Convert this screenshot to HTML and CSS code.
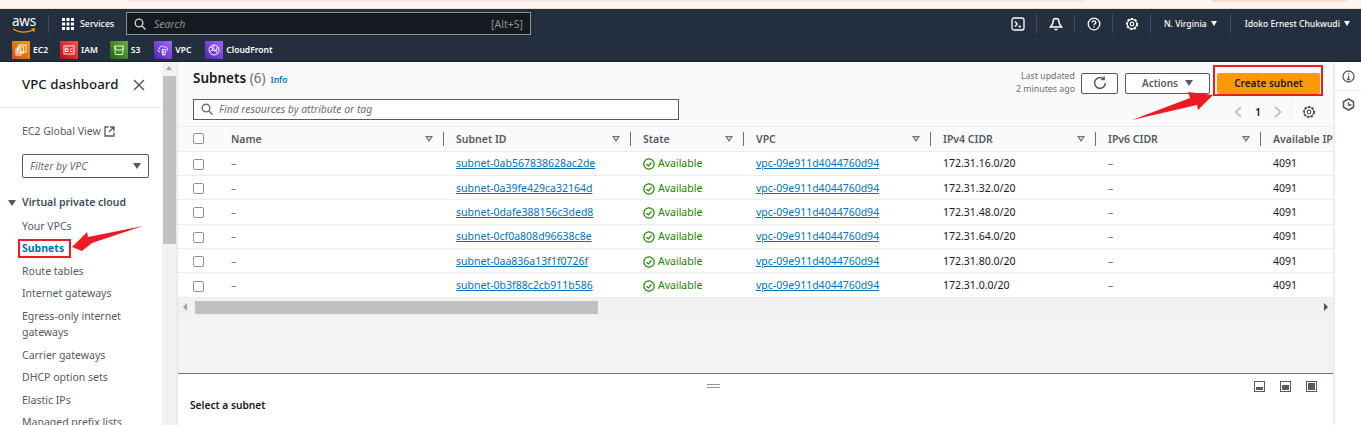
FILE: index.html
```html
<!DOCTYPE html>
<html lang="en">
  <head>
    <meta charset="UTF-8" />
    <meta name="viewport" content="width=device-width, initial-scale=1.0" />
    <title>Subnets | VPC Console</title>
    <link rel="stylesheet" href="styles.css">
  </head>
  <body>
    <div class="strip">
      <span class="strip-grey"></span>
      <span class="strip-peach"></span>
    </div>

    <header class="header">
      <div class="nav-top">
        <div class="logo">
          <span class="logo-text">aws</span>
          <svg class="logo-smile" width="24" height="6" viewBox="0 0 24 6"><path d="M1 1c6 4 15 4 21 .5M19.5 1 22.5 .8 21.8 3.8" fill="none" stroke="#f90" stroke-width="1.2"/></svg>
        </div>
        <span class="nav-sep"></span>
        <svg class="grid-icon" width="12" height="12" viewBox="0 0 12 12" fill="#fff"><rect width="3" height="3"/><rect x="4.5" width="3" height="3"/><rect x="9" width="3" height="3"/><rect y="4.5" width="3" height="3"/><rect x="4.5" y="4.5" width="3" height="3"/><rect x="9" y="4.5" width="3" height="3"/><rect y="9" width="3" height="3"/><rect x="4.5" y="9" width="3" height="3"/><rect x="9" y="9" width="3" height="3"/></svg>
        <span class="services">Services</span>
        <div class="search">
          <svg width="12" height="12" viewBox="0 0 12 12" fill="none" stroke="#d5dbdb" stroke-width="1.3"><circle cx="5" cy="5" r="3.8"/><path d="M8 8l3.5 3.5"/></svg>
          <span class="search-text">Search</span>
          <span class="search-key">[Alt+S]</span>
        </div>
        <div class="nav-right">
          <svg class="nav-icon" width="14" height="14" viewBox="0 0 14 14" fill="none" stroke="#fff" stroke-width="1.3"><rect x="1" y="1" width="12" height="12" rx="2"/><path d="M4 4.5 6.3 7 4 9.5M7.5 9.5H10"/></svg>
          <span class="nav-sep tall"></span>
          <svg class="nav-icon" width="14" height="14" viewBox="0 0 14 14" fill="none" stroke="#fff" stroke-width="1.5"><path d="M7 1.500c-2.200 0-3 1.700-3 3.500 0 2-1.500 3.500-2.500 5h11C11.500 8.500 10 7 10 5c0-1.800-.8-3.500-3-3.500z"/><path d="M5.500 12.500h3"/></svg>
          <span class="nav-sep tall"></span>
          <svg class="nav-icon" width="14" height="14" viewBox="0 0 14 14" fill="none" stroke="#fff" stroke-width="1.3"><circle cx="7" cy="7" r="5.8"/><path d="M5.200 5.500C5.200 4.400 6 3.800 7 3.800s1.800.6 1.800 1.600C8.800 6.700 7 6.800 7 8.300"/><path d="M7 9.300v1.300"/></svg>
          <span class="nav-sep tall"></span>
          <svg class="nav-icon" width="14" height="14" viewBox="0 0 14 14" fill="none" stroke="#fff"><circle cx="7" cy="7" r="5.2" stroke-width="1.8" stroke-dasharray="2.4 1.4"/><circle cx="7" cy="7" r="4.6" stroke-width="1"/><circle cx="7" cy="7" r="1.8" stroke-width="1.2"/></svg>
          <span class="nav-sep tall"></span>
          <span class="nav-menu region">N. Virginia <i class="caret white"></i></span>
          <span class="nav-sep tall"></span>
          <span class="nav-menu">Idoko Ernest Chukwudi <i class="caret white"></i></span>
        </div>
      </div>
      <div class="favs">
        <span class="fav">
          <span class="tile tile-orange"><svg width="12" height="12" viewBox="0 0 12 12" fill="none" stroke="#fff" stroke-width=".9"><rect x="4" y="1" width="7" height="7"/><rect x="2.5" y="3" width="6" height="6"/><rect x="1" y="5" width="5" height="6"/></svg></span>EC2
        </span>
        <span class="fav">
          <span class="tile tile-red"><svg width="12" height="12" viewBox="0 0 12 12" fill="none" stroke="#fff" stroke-width=".9"><rect x="1" y="2" width="10" height="8"/><rect x="2.5" y="5" width="2.5" height="2.5"/><path d="M3 5c0-2 1.500-2 1.500 0M7 5h2.500M7 7.500h2.500"/></svg></span>IAM
        </span>
        <span class="fav">
          <span class="tile tile-green"><svg width="12" height="12" viewBox="0 0 12 12" fill="none" stroke="#fff" stroke-width=".9"><path d="M1.500 2h9l-1 8.500h-7zM1.500 2 3 5.500c2 1 5 .8 7.500-.8"/></svg></span>S3
        </span>
        <span class="fav fav-shift">
          <span class="tile tile-purple"><svg width="12" height="12" viewBox="0 0 12 12" fill="none" stroke="#fff" stroke-width=".9"><path d="M3 8C1 8 .7 5.500 2.300 5 2.500 2.500 5.500 1 7.500 3c2-.4 3.500 1.500 3 3.500"/><path d="M5 5.500h3.500l-.5 5.500H5.500z"/><path d="M6.500 7v2.500"/></svg></span>VPC
        </span>
        <span class="fav fav-shift">
          <span class="tile tile-purple"><svg width="12" height="12" viewBox="0 0 12 12" fill="none" stroke="#fff" stroke-width=".9"><circle cx="6" cy="6" r="5"/><path d="M2 3c3 0 6 3 7.500 7M6 1 4 6l-2.500 2.500M4 6l4 1 1.500-4"/></svg></span>CloudFront
        </span>
      </div>
    </header>

    <div class="page">
      <aside class="sidebar">
        <div class="side-head">
          <span class="side-title">VPC dashboard</span>
          <svg width="12" height="12" viewBox="0 0 12 12" fill="none" stroke="#545b64" stroke-width="1.5"><path d="M1 1l10 10M11 1 1 11"/></svg>
        </div>
        <div class="side-body">
          <div class="side-link">
            EC2 Global View
            <svg width="11" height="11" viewBox="0 0 11 11" fill="none" stroke="#545b64" stroke-width="1.3"><path d="M4.500 1H1v9h9V6.500M6 1h4v4M10 1 5 6"/></svg>
          </div>
          <div class="side-filter">
            <span>Filter by VPC</span>
            <i class="caret grey"></i>
          </div>
          <div class="side-section"><i class="caret grey"></i>Virtual private cloud</div>
          <ul class="side-list">
            <li>Your VPCs</li>
            <li class="active">Subnets</li>
            <li>Route tables</li>
            <li>Internet gateways</li>
            <li class="two-line">Egress-only internet gateways</li>
            <li>Carrier gateways</li>
            <li>DHCP option sets</li>
            <li>Elastic IPs</li>
            <li>Managed prefix lists</li>
          </ul>
        </div>
      </aside>

      <div class="side-scroll">
        <span class="scroll-up"></span>
        <span class="scroll-thumb"></span>
      </div>

      <main class="main">
        <div class="panel-head">
          <div class="head-left">
            <div class="title-row">
              <h1 class="title">Subnets <span class="count">(6)</span></h1>
              <span class="info">Info</span>
            </div>
            <div class="find">
              <svg width="12" height="12" viewBox="0 0 12 12" fill="none" stroke="#687078" stroke-width="1.4"><circle cx="5" cy="5" r="3.8"/><path d="M8 8l3.500 3.500"/></svg>
              <span>Find resources by attribute or tag</span>
            </div>
          </div>
          <div class="head-right">
            <div class="actions">
              <span class="updated">Last updated<br />2 minutes ago</span>
              <button class="btn btn-icon" type="button">
                <svg width="14" height="14" viewBox="0 0 13 13" fill="none" stroke="#545b64" stroke-width="1.4"><path d="M11.500 6.500a5 5 0 1 1-1.700-3.800"/><path d="M10.300 .5v2.700H7.600"/></svg>
              </button>
              <button class="btn btn-actions" type="button">Actions <i class="caret grey"></i></button>
              <button class="btn btn-primary" type="button">Create subnet</button>
            </div>
            <div class="pager">
              <svg width="8" height="12" viewBox="0 0 8 12" fill="none" stroke="#aab7b8" stroke-width="1.5"><path d="M7 1 1.500 6 7 11"/></svg>
              <span class="page-num">1</span>
              <svg width="8" height="12" viewBox="0 0 8 12" fill="none" stroke="#aab7b8" stroke-width="1.5"><path d="M1 1l5.500 5L1 11"/></svg>
              <span class="pager-sep"></span>
              <svg width="14" height="14" viewBox="0 0 14 14" fill="none" stroke="#545b64"><circle cx="7" cy="7" r="5.2" stroke-width="1.8" stroke-dasharray="2.4 1.4"/><circle cx="7" cy="7" r="4.6" stroke-width="1"/><circle cx="7" cy="7" r="1.8" stroke-width="1.2"/></svg>
            </div>
          </div>
        </div>

        <div class="table">
          <div class="row row-head">
            <span class="cell"><i class="check"></i></span>
            <span class="cell th">Name<i class="sort"></i></span>
            <span class="cell th">Subnet ID<i class="sort"></i></span>
            <span class="cell th">State<i class="sort"></i></span>
            <span class="cell th">VPC<i class="sort"></i></span>
            <span class="cell th">IPv4 CIDR<i class="sort"></i></span>
            <span class="cell th">IPv6 CIDR<i class="sort"></i></span>
            <span class="cell th">Available IPv4</span>
          </div>
          <div class="row">
            <span class="cell"><i class="check"></i></span><span class="cell dash">–</span>
            <span class="cell"><a class="link">subnet-0ab567838628ac2de</a></span>
            <span class="cell state"><svg width="12" height="12" viewBox="0 0 12 12" fill="none" stroke="#1d8102" stroke-width="1.2"><circle cx="6" cy="6" r="5.2"/><path d="M3.500 6.200 5.300 8l3.200-3.500"/></svg>Available</span>
            <span class="cell"><a class="link">vpc-09e911d4044760d94</a></span>
            <span class="cell">172.31.16.0/20</span><span class="cell dash">–</span><span class="cell">4091</span>
          </div>
          <div class="row">
            <span class="cell"><i class="check"></i></span><span class="cell dash">–</span>
            <span class="cell"><a class="link">subnet-0a39fe429ca32164d</a></span>
            <span class="cell state"><svg width="12" height="12" viewBox="0 0 12 12" fill="none" stroke="#1d8102" stroke-width="1.2"><circle cx="6" cy="6" r="5.2"/><path d="M3.500 6.200 5.300 8l3.200-3.500"/></svg>Available</span>
            <span class="cell"><a class="link">vpc-09e911d4044760d94</a></span>
            <span class="cell">172.31.32.0/20</span><span class="cell dash">–</span><span class="cell">4091</span>
          </div>
          <div class="row">
            <span class="cell"><i class="check"></i></span><span class="cell dash">–</span>
            <span class="cell"><a class="link">subnet-0dafe388156c3ded8</a></span>
            <span class="cell state"><svg width="12" height="12" viewBox="0 0 12 12" fill="none" stroke="#1d8102" stroke-width="1.2"><circle cx="6" cy="6" r="5.2"/><path d="M3.500 6.200 5.300 8l3.200-3.500"/></svg>Available</span>
            <span class="cell"><a class="link">vpc-09e911d4044760d94</a></span>
            <span class="cell">172.31.48.0/20</span><span class="cell dash">–</span><span class="cell">4091</span>
          </div>
          <div class="row">
            <span class="cell"><i class="check"></i></span><span class="cell dash">–</span>
            <span class="cell"><a class="link">subnet-0cf0a808d96638c8e</a></span>
            <span class="cell state"><svg width="12" height="12" viewBox="0 0 12 12" fill="none" stroke="#1d8102" stroke-width="1.2"><circle cx="6" cy="6" r="5.2"/><path d="M3.500 6.200 5.300 8l3.200-3.500"/></svg>Available</span>
            <span class="cell"><a class="link">vpc-09e911d4044760d94</a></span>
            <span class="cell">172.31.64.0/20</span><span class="cell dash">–</span><span class="cell">4091</span>
          </div>
          <div class="row">
            <span class="cell"><i class="check"></i></span><span class="cell dash">–</span>
            <span class="cell"><a class="link">subnet-0aa836a13f1f0726f</a></span>
            <span class="cell state"><svg width="12" height="12" viewBox="0 0 12 12" fill="none" stroke="#1d8102" stroke-width="1.2"><circle cx="6" cy="6" r="5.2"/><path d="M3.500 6.200 5.300 8l3.200-3.500"/></svg>Available</span>
            <span class="cell"><a class="link">vpc-09e911d4044760d94</a></span>
            <span class="cell">172.31.80.0/20</span><span class="cell dash">–</span><span class="cell">4091</span>
          </div>
          <div class="row">
            <span class="cell"><i class="check"></i></span><span class="cell dash">–</span>
            <span class="cell"><a class="link">subnet-0b3f88c2cb911b586</a></span>
            <span class="cell state"><svg width="12" height="12" viewBox="0 0 12 12" fill="none" stroke="#1d8102" stroke-width="1.2"><circle cx="6" cy="6" r="5.2"/><path d="M3.500 6.200 5.300 8l3.200-3.500"/></svg>Available</span>
            <span class="cell"><a class="link">vpc-09e911d4044760d94</a></span>
            <span class="cell">172.31.0.0/20</span><span class="cell dash">–</span><span class="cell">4091</span>
          </div>
        </div>

        <div class="hscroll">
          <i class="arrow-left"></i>
          <span class="hscroll-thumb"></span>
          <i class="arrow-right"></i>
        </div>

        <div class="gap"></div>

        <div class="split">
          <div class="split-bar">
            <span class="handle"></span>
            <div class="split-icons">
              <svg width="11" height="11" viewBox="0 0 11 11"><rect x=".5" y=".5" width="10" height="10" fill="#fff" stroke="#545b64"/><rect x="2" y="6" width="7" height="3" fill="#545b64"/></svg>
              <svg width="11" height="11" viewBox="0 0 11 11"><rect x=".5" y=".5" width="10" height="10" fill="#fff" stroke="#545b64"/><rect x="2" y="4" width="7" height="5" fill="#545b64"/></svg>
              <svg width="11" height="11" viewBox="0 0 11 11"><rect x=".5" y=".5" width="10" height="10" fill="#fff" stroke="#545b64"/><rect x="2" y="2" width="7" height="7" fill="#545b64"/></svg>
            </div>
          </div>
          <div class="split-title">Select a subnet</div>
        </div>
      </main>

      <aside class="rail">
        <div class="rail-item first">
          <svg width="13" height="13" viewBox="0 0 13 13" fill="none" stroke="#545b64" stroke-width="1.3"><circle cx="6.500" cy="6.500" r="5.500"/><path d="M6.500 5.500v4M4.800 9.500h3.400M6.500 3v1.300"/></svg>
        </div>
        <div class="rail-item second">
          <svg width="13" height="13" viewBox="0 0 13 13" fill="none" stroke="#545b64" stroke-width="1.6"><path d="M6.500 1 11.500 3.800v5.400L6.500 12l-5-2.800V3.800z"/><path d="M6.500 4v3h3" stroke-width="1.3"/></svg>
        </div>
      </aside>
    </div>

    <!-- red markup drawn over the screenshot -->
    <span class="mark mark-subnets"></span>
    <span class="mark mark-create"></span>
    <svg class="arrow arrow-nav" width="80" height="40" viewBox="0 0 80 40"><path d="M1 22 16 7 17 12 72 1 21 18 11 26z" fill="#ed1c24"/></svg>
    <svg class="arrow arrow-btn" width="90" height="36" viewBox="0 0 90 36"><path d="M1 33 59 11 57 5 82 8 67 23 66 18z" fill="#ed1c24"/></svg>
  </body>
</html>
```

FILE: styles.css
```css
* {
  box-sizing: border-box;
}
html,
body {
  height: 425px;
  overflow: hidden;
}
body {
  margin: 0;
  position: relative;
  font-family: "Noto Sans", "Open Sans", sans-serif;
  font-size: 10.5px;
  color: #16191f;
  background-color: #fff;
}

/* browser bar left at the top of the capture */
.strip {
  height: 9px;
  background-color: #fff5f0;
  border-bottom: 1px solid #fbdcc8;
  display: flex;
  align-items: flex-start;
  padding-left: 128px;
}
.strip-grey {
  width: 957px;
  height: 2px;
  background-color: #f5e8e3;
  border-radius: 0 0 3px 3px;
}
.strip-peach {
  width: 136px;
  height: 2px;
  margin-left: 126px;
  background-color: #ffdcc8;
  border-radius: 0 0 3px 3px;
}

.header {
  height: 53px;
  background-color: #232f3e;
  color: #fff;
  border-bottom: 1px solid #1a2430;
}
.nav-top {
  height: 29px;
  display: flex;
  align-items: center;
  padding-left: 12px;
}
.logo {
  width: 24px;
  height: 22px;
  position: relative;
  flex-shrink: 0;
}
.logo-text {
  display: block;
  font-size: 13.5px;
  line-height: 16px;
  letter-spacing: -.2px;
}
.logo-smile {
  position: absolute;
  left: 0;
  top: 15px;
}
.nav-sep {
  width: 1px;
  height: 18px;
  margin: 0 13px 0 12px;
  background-color: #414d5c;
  flex-shrink: 0;
}
.nav-sep.tall {
  height: 19px;
  margin: 0;
}
.grid-icon {
  flex-shrink: 0;
}
.services {
  margin-left: 6px;
  width: 46px;
  font-size: 8.8px;
  font-weight: 500;
}
.search {
  width: 405px;
  height: 23px;
  display: flex;
  align-items: center;
  padding: 0 7px;
  background-color: #16191f;
  border: 1px solid #879596;
}
.search-text {
  margin-left: 8px;
  font-style: italic;
  color: #879596;
  flex: 1;
}
.search-key {
  color: #879596;
}
.nav-right {
  margin-left: auto;
  display: flex;
  align-items: center;
  gap: 11.5px;
  padding-right: 11px;
}
.nav-menu {
  font-size: 8.6px;
  font-weight: 500;
  margin-left: 2px;
  display: flex;
  align-items: center;
  gap: 4px;
}
.nav-menu.region {
  margin: 0 2px 0 1px;
}
.favs {
  height: 23px;
  display: flex;
  align-items: center;
  padding-left: 12px;
  gap: 12px;
  font-size: 8.5px;
  font-weight: 600;
}
.fav {
  display: flex;
  align-items: center;
  gap: 3px;
}
.fav-shift {
  margin-left: 2px;
}
.tile {
  width: 18px;
  height: 18px;
  display: flex;
  align-items: center;
  justify-content: center;
}
.tile-orange {
  background: linear-gradient(45deg, #c8511b, #ff9900);
}
.tile-red {
  background: linear-gradient(45deg, #bd0816, #ff5252);
}
.tile-green {
  background: linear-gradient(45deg, #1b660f, #6cae3e);
}
.tile-purple {
  background: linear-gradient(45deg, #4d27aa, #a166ff);
}

.caret {
  display: inline-block;
  width: 0;
  height: 0;
  border-left: 4px solid transparent;
  border-right: 4px solid transparent;
  border-top: 6px solid #545b64;
}
.caret.white {
  border-top-color: #fff;
  border-left-width: 3px;
  border-right-width: 3px;
  border-top-width: 5px;
}

.page {
  display: flex;
  height: 363px;
}
.sidebar {
  width: 162px;
  flex-shrink: 0;
  background-color: #fff;
  color: #545b64;
}
.side-head {
  height: 46px;
  padding: 0 17px 0 22px;
  display: flex;
  align-items: center;
  justify-content: space-between;
  border-bottom: 1px solid #eaeded;
}
.side-title {
  font-size: 13.3px;
  font-weight: 500;
  line-height: 18px;
  margin-bottom: 2px;
  color: #16191f;
}
.side-body {
  padding-left: 22px;
}
.side-link {
  margin-top: 15px;
  line-height: 16px;
  display: flex;
  align-items: center;
  gap: 3px;
}
.side-filter {
  width: 127px;
  height: 24px;
  margin-top: 15px;
  padding: 0 7px;
  display: flex;
  align-items: center;
  justify-content: space-between;
  border: 1px solid #545b64;
  border-radius: 2px;
  font-style: italic;
  color: #687078;
}
.side-section {
  position: relative;
  margin-top: 16px;
  font-weight: 600;
  line-height: 16px;
  color: #414d5c;
}
.side-section .caret {
  position: absolute;
  left: -14px;
  top: 6px;
}
.side-list {
  list-style: none;
  margin: 7.5px 0 0;
  padding: 0;
  line-height: 16px;
}
.side-list li {
  height: 22.5px;
}
.side-list .two-line {
  height: 39px;
}
.side-list .active {
  color: #0073bb;
  font-weight: 700;
}

.side-scroll {
  width: 16px;
  flex-shrink: 0;
  background-color: #f1f1f1;
  border-right: 1px solid #dfe3e3;
  padding-top: 4px;
}
.scroll-up {
  display: block;
  width: 0;
  height: 0;
  margin: 0 0 4px 4px;
  border-left: 3.5px solid transparent;
  border-right: 3.5px solid transparent;
  border-bottom: 4px solid #a3a3a3;
}
.scroll-thumb {
  display: block;
  width: 13px;
  height: 168px;
  margin-left: 1px;
  margin-top: 6px;
  background-color: #c1c1c1;
}

.main {
  flex: 1;
  min-width: 0;
  display: flex;
  flex-direction: column;
  background-color: #f2f3f3;
}
.panel-head {
  height: 65px;
  padding: 6px 13px 0 15px;
  display: flex;
  justify-content: space-between;
  background-color: #fafafa;
  border-bottom: 1px solid #eaeded;
}
.title-row {
  display: flex;
  align-items: baseline;
  gap: 5px;
}
.title {
  margin: 0;
  font-size: 13.5px;
  font-weight: 600;
  line-height: 20px;
}
.count {
  font-weight: 400;
  color: #687078;
}
.info {
  font-size: 8.5px;
  font-weight: 600;
  color: #0073bb;
}
.find {
  width: 486px;
  height: 21px;
  margin-top: 11px;
  padding: 0 7px 1px;
  display: flex;
  align-items: center;
  gap: 6px;
  background-color: #fff;
  border: 1px solid #545b64;
  font-style: italic;
  font-size: 10.4px;
  color: #687078;
}
.head-right {
  display: flex;
  flex-direction: column;
  align-items: flex-end;
}
.actions {
  display: flex;
  align-items: center;
  gap: 7px;
  margin-top: 2px;
}
.updated {
  font-size: 8.8px;
  line-height: 13px;
  text-align: right;
  color: #687078;
  margin-right: -1px;
}
.btn {
  height: 21px;
  padding: 0;
  display: flex;
  align-items: center;
  justify-content: center;
  font-family: inherit;
  font-size: 10px;
  font-weight: 600;
  background-color: #fff;
  color: #545b64;
  border: 1px solid #545b64;
  border-radius: 2px;
}
.btn-icon {
  width: 37px;
}
.btn-actions {
  width: 85px;
  gap: 7px;
}
.btn-primary {
  width: 103px;
  background-color: #ff9900;
  border-color: #ff9900;
  color: #16191f;
}
.pager {
  margin-top: 4px;
  padding-right: 4px;
  display: flex;
  align-items: center;
  gap: 13px;
  color: #16191f;
}
.page-num {
  font-weight: 600;
}
.pager-sep {
  width: 1px;
  height: 23px;
  margin-left: -4px;
  margin-right: -3px;
  background-color: #eaeded;
}

.row {
  height: 24.4px;
  display: grid;
  grid-template-columns: 40px 226px 187px 113px 187px 165px 165px 72px;
  align-items: center;
  background-color: #fff;
  border-bottom: 1px solid #eaeded;
  overflow: hidden;
}
.row-head {
  height: 24.5px;
  background-color: #fafafa;
}
.cell {
  position: relative;
  display: flex;
  align-items: center;
  padding-left: 12px;
  white-space: nowrap;
  color: #16191f;
  min-width: 0;
}
.cell:first-child {
  padding-left: 15px;
}
.cell:nth-child(2) {
  padding-left: 13px;
}
.th {
  height: 14px;
  font-weight: 600;
  color: #545b64;
  border-right: 1px solid #687078;
}
.cell.th:last-child {
  border-right: 0;
}
.sort {
  position: absolute;
  right: 10px;
  top: 4px;
  width: 0;
  height: 0;
  border-left: 4px solid transparent;
  border-right: 4px solid transparent;
  border-top: 6px solid #687078;
}
.sort::after {
  content: "";
  position: absolute;
  left: -2px;
  top: -5px;
  border-left: 2px solid transparent;
  border-right: 2px solid transparent;
  border-top: 3px solid #d5dbdb;
}
.check {
  display: block;
  width: 11px;
  height: 11px;
  background-color: #fff;
  border: 1px solid #879596;
  border-radius: 2px;
}
.row:not(.row-head) .check {
  margin-top: 2px;
}
.dash {
  color: #687078;
}
.link {
  color: #0073bb;
  text-decoration: underline;
}
.state {
  gap: 3px;
  color: #1d8102;
}
.state svg {
  margin-top: 2px;
}

.hscroll {
  height: 17px;
  margin-top: 1px;
  display: flex;
  align-items: center;
  background-color: #f1f1f1;
}
.arrow-left {
  width: 0;
  height: 0;
  margin-left: 5px;
  border-top: 4px solid transparent;
  border-bottom: 4px solid transparent;
  border-right: 4px solid #a3a3a3;
}
.hscroll-thumb {
  width: 403px;
  height: 13px;
  margin-left: 8px;
  background-color: #c1c1c1;
}
.arrow-right {
  width: 0;
  height: 0;
  margin-left: auto;
  margin-right: 5px;
  border-top: 4px solid transparent;
  border-bottom: 4px solid transparent;
  border-left: 4px solid #505050;
}
.gap {
  flex: 1;
}
.split {
  height: 52px;
  background-color: #fff;
  border-top: 1px solid #687078;
  padding-left: 12px;
}
.split-bar {
  height: 21px;
  position: relative;
}
.handle {
  position: absolute;
  left: 517px;
  top: 10px;
  width: 13px;
  height: 4px;
  border-top: 1px solid #879596;
  border-bottom: 1px solid #879596;
}
.split-icons {
  position: absolute;
  right: 16px;
  top: 7px;
  display: flex;
  gap: 15px;
}
.split-title {
  margin-top: 2px;
  font-size: 10.2px;
  font-weight: 600;
  line-height: 16px;
}

.rail {
  width: 28px;
  flex-shrink: 0;
  background-color: #fff;
  border-left: 2px solid #eaeded;
}
.rail-item {
  display: flex;
  align-items: center;
  justify-content: center;
}
.rail-item.first {
  height: 29px;
  border-bottom: 1px solid #eaeded;
}
.rail-item.second {
  height: 26px;
}

/* annotations sit on top of the page */
.mark {
  position: absolute;
  border: 2px solid #ed1c24;
}
.mark-subnets {
  left: 18px;
  top: 239px;
  width: 53px;
  height: 19px;
}
.mark-create {
  left: 1213px;
  top: 65px;
  width: 110px;
  height: 31px;
}
.arrow {
  position: absolute;
}
.arrow-nav {
  left: 71px;
  top: 225px;
}
.arrow-btn {
  left: 1131px;
  top: 87px;
}
```
